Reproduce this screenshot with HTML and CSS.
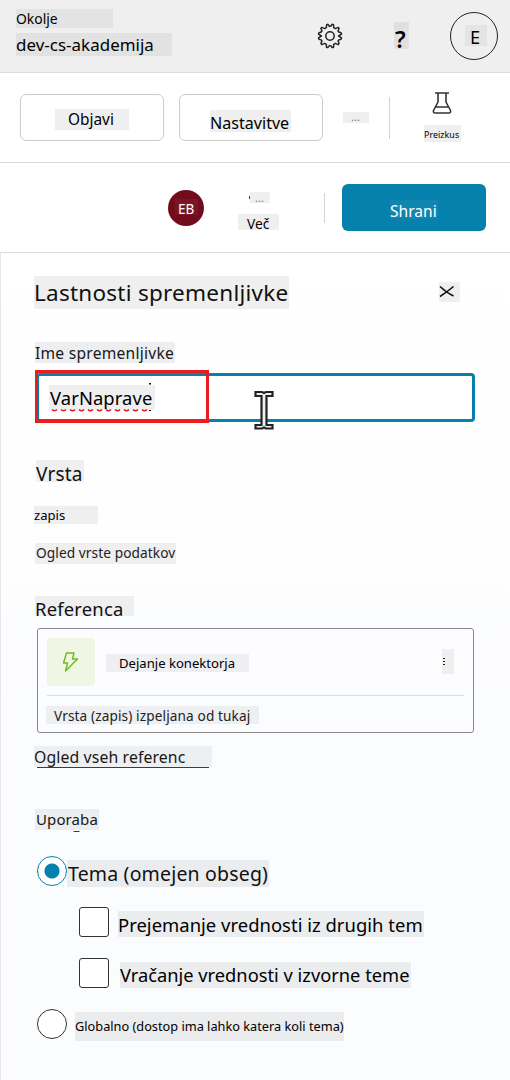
FILE: index.html
```html
<!DOCTYPE html>
<html lang="sl">
<head>
<meta charset="utf-8">
<title>Lastnosti spremenljivke</title>
<link rel="stylesheet" href="styles.css">
</head>
<body>
<header class="top">
  <div class="env">
    <div class="tag env-label">Okolje</div>
    <div class="tag env-name">dev-cs-akademija</div>
  </div>
  <svg class="gear" width="26" height="26" viewBox="0 0 26 26" fill="none" stroke="#222" stroke-width="1.5" stroke-linejoin="round"><path d="M9.300 4.700 L9.700 1.600 Q11 1 11.300 1.900 Q13 5 14.700 1.900 Q15.300 1 16.500 1.600 L16.700 4.700 L18.300 5.600 L21.200 4.400 Q22.400 5.400 21.800 6.200 Q19.900 9 23.300 9.400 Q24.700 9.600 24.500 11.200 L21.600 13 L24.500 14.800 Q24.600 16.200 23.300 16.500 Q20 17 21.800 19.700 Q22.300 20.600 21.200 21.600 L18.300 20.400 L16.700 21.300 L16.500 24.300 Q15.300 25 14.700 24 Q13 21 11.300 24 Q10.800 25 9.500 24.300 L9.300 21.300 L7.700 20.400 L4.800 21.600 Q3.700 20.600 4.200 19.700 Q6 17 2.700 16.500 Q1.400 16.200 1.500 14.800 L4.400 13 L1.500 11.200 Q1.300 9.600 2.700 9.400 Q6.100 9 4.200 6.200 Q3.600 5.400 4.800 4.400 L7.700 5.600 Z"/><circle cx="13" cy="13" r="4.200"/></svg>
  <div class="tag help">?</div>
  <div class="account"><div class="tag account-letter">E</div></div>
</header>

<nav class="bar actions">
  <button class="outline"><span class="tag publish">Objavi</span></button>
  <button class="outline second"><span class="tag settings">Nastavitve</span></button>
  <div class="tag dots overflow">...</div>
  <div class="rule rule-a"></div>
  <div class="test">
    <svg width="20" height="23" viewBox="0 0 20 23" fill="none" stroke="#333" stroke-width="1.600" stroke-linejoin="round"><path d="M3 2h14M6 2v9L1.500 19.500Q1 22 3 22h14q2 0 1.500-2.500L14 11V2M4 16h12"/></svg>
    <div class="tag test-label">Preizkus</div>
  </div>
</nav>

<section class="bar save-bar">
  <div class="avatar"><div class="tag avatar-text">EB</div></div>
  <div class="more">
    <div class="tag dots more-dots">...</div>
    <div class="tag more-label">Več</div>
  </div>
  <div class="rule rule-b"></div>
  <button class="save"><span class="tag save-text">Shrani</span></button>
</section>

<main class="panel">
  <div class="panel-head">
    <h1 class="tag title">Lastnosti spremenljivke</h1>
    <div class="tag close"><svg width="16" height="14" viewBox="0 0 16 14" stroke="#111" stroke-width="1.600" fill="none"><path d="M1 1.500Q8 8 14.500 11M14.500 1.500Q8 7 1 11.500"/></svg></div>
  </div>
  <label class="tag name-label">Ime spremenljivke</label>
  <div class="field">
    <div class="tag field-text">VarNaprave</div>
    <svg class="spelling" width="102" height="30" viewBox="0 0 102 30" fill="none"><path d="M2 26.500q2.500 2.500 5 0m4 0q2.500 2.500 5 0m4 0q2.500 2.500 5 0m4 0q2.500 2.500 5 0m4 0q2.500 2.500 5 0m4 0q2.500 2.500 5 0m4 0q2.500 2.500 5 0m4 0q2.500 2.500 5 0m4 0q2.500 2.500 5 0m4 0q2.500 2.500 5 0m4 0q2.500 2.500 5 0" stroke="#e8151c" stroke-width="1.500"/><path d="M99 0h2v1.500h-2zM99 27h2v1h-2z" fill="#111"/></svg>
    <div class="marker"></div>
    <svg class="ibeam" width="20" height="41" viewBox="0 0 20 41"><path d="M1.500 2h6.500l2 1 2-1h6.500v4h-6v29h6v3.500H12l-2-1-2 1H1.500V35h6V6h-6z" fill="#eee" stroke="#222" stroke-width="2.200"/></svg>
  </div>

  <h2 class="tag kind">Vrsta</h2>
  <div class="tag kind-value">zapis</div>
  <div class="tag kind-link">Ogled vrste podatkov</div>

  <h2 class="tag reference">Referenca</h2>
  <article class="card">
    <div class="card-row">
      <div class="card-icon"><svg width="17" height="21" viewBox="0 0 17 21" fill="none" stroke="#6cbb1c" stroke-width="1.400" stroke-linejoin="round"><path d="M4.500 2h7.500L10.500 8h5L3.500 20l2-8H1.500z"/></svg></div>
      <div class="tag card-title">Dejanje konektorja</div>
      <div class="tag card-menu"><i></i><i></i><i></i></div>
    </div>
    <div class="tag card-note">Vrsta (zapis) izpeljana od tukaj</div>
  </article>
  <a class="tag all-refs">Ogled vseh referenc</a>

  <h2 class="tag usage">Uporaba</h2>
  <div class="option option-topic"><span class="radio on"></span><span class="tag topic">Tema (omejen obseg)</span></div>
  <div class="option option-sub"><span class="check"></span><span class="tag receive">Prejemanje vrednosti iz drugih tem</span></div>
  <div class="option option-sub"><span class="check"></span><span class="tag return">Vračanje vrednosti v izvorne teme</span></div>
  <div class="option option-global"><span class="radio"></span><span class="tag global">Globalno (dostop ima lahko katera koli tema)</span></div>
</main>
</body>
</html>
```
FILE: styles.css
```css
* { box-sizing: border-box; }
body { margin: 0; width: 510px; height: 1080px; overflow: hidden; font-family: "Noto Sans", sans-serif; color: #000; background: #fff; }
h1, h2 { margin: 0; font-weight: 400; }
button { font-family: inherit; margin: 0; padding: 0; }
svg { display: block; flex: none; }

.tag { display: block; flex: none; background: #efefef; white-space: nowrap; text-align: left; font-weight: 400; }

/* environment header */
.top { display: flex; align-items: flex-start; height: 73px; background: #efefef; border-bottom: 1px solid #dcdcdc; }
.env { width: 156px; margin: 9px 0 0 16px; }
.env-label { width: 97px; height: 19px; background: #e2e4e3; font-size: 13.900px; line-height: 19px; }
.env-name { width: 156px; height: 23px; margin-top: 5px; background: #e2e2e2; font-size: 16.900px; letter-spacing: .05px; line-height: 23px; }
.gear { margin: 23px 0 0 145px; }
.help { width: 15px; height: 27px; margin: 22px 0 0 51px; padding-left: 1px; background: #e0e0e0; font-size: 23px; line-height: 34px; font-weight: 600; }
.account { width: 48px; height: 48px; margin: 12px 0 0 41px; padding: 12px 0 0 14px; border: 1px solid #222; border-radius: 50%; }
.account-letter { width: 22px; height: 21px; padding-left: 5px; background: #e4e4e4; font-size: 18.200px; line-height: 25px; }

/* action rows */
.bar { display: flex; align-items: flex-start; height: 90px; border-bottom: 1px solid #dadada; }
.outline { width: 144px; height: 47px; margin: 21px 0 0 20px; display: flex; align-items: flex-start; background: #fff; border: 1px solid #cfcccc; border-radius: 6px; color: inherit; }
.second { margin-left: 15px; }
.publish { width: 74px; height: 21px; margin: 14px 0 0 34px; padding-left: 13px; font-size: 15.400px; line-height: 21px; }
.settings { width: 81px; height: 22px; margin: 15px 0 0 30px; font-size: 16.100px; line-height: 26px; }
.dots { font-size: 11px; line-height: 10px; color: #777; }
.overflow { width: 26px; height: 11px; margin: 39px 0 0 20px; padding-left: 8px; }
.rule { width: 1px; flex: none; background: #d2d2d2; }
.rule-a { height: 42px; margin: 24px 0 0 20px; }
.test { width: 37px; margin: 18px 0 0 34px; }
.test svg { margin-left: 8px; }
.test-label { width: 37px; height: 17px; margin-top: 11px; font-size: 8.900px; letter-spacing: .05px; line-height: 19px; }
.avatar { width: 36px; height: 36px; margin: 27px 0 0 168px; padding: 9px 0 0 7px; border-radius: 50%; background: #720b1c; color: #fff; }
.avatar-text { width: 23px; height: 16px; padding-left: 3px; background: #7a1525; font-size: 13.500px; line-height: 20px; }
.more { position: relative; width: 41px; margin: 29px 0 0 34px; }
.more::before { content: ""; position: absolute; left: 11px; top: 4px; width: 1px; height: 3px; background: #444; }
.more-dots { width: 20px; height: 11px; margin-left: 12px; padding-left: 5px; line-height: 12px; }
.more-label { width: 41px; height: 16px; margin-top: 11px; padding-left: 9px; font-size: 13.800px; line-height: 20px; }
.rule-b { height: 30px; margin: 30px 0 0 45px; }
.save { display: flex; align-items: flex-start; width: 144px; height: 47px; margin: 21px 0 0 17px; border: 0; border-radius: 6px; background: #0680ad; color: #fff; }
.save-text { width: 48px; height: 19px; margin: 16px 0 0 48px; background: #1085b0; font-size: 15.600px; line-height: 23px; }

/* properties panel */
.panel { height: 827px; padding: 23px 0 0 33px; border-left: 1px solid #e8e6e6; background: linear-gradient(#fff 0%, #fefefe 30%, #fbfcfe 60%); }
.panel-head { display: flex; align-items: flex-start; }
.title { width: 255px; height: 33px; font-size: 22.500px; letter-spacing: .25px; line-height: 34px; color: #111; }
.close { width: 21px; height: 20px; margin: 6px 0 0 150px; padding-top: 3px; }
.name-label { width: 140px; height: 21px; margin: 33px 0 0 1px; background: #edeef0; font-size: 15.600px; letter-spacing: .25px; line-height: 22px; color: #181818; }
.field { position: relative; width: 439px; height: 49px; margin: 10px 0 0 2px; padding: 9px 0 0 10px; border: 3px solid #0680ad; border-radius: 4px; background: #fff; }
.field-text { width: 106px; height: 25px; padding-left: 1px; font-size: 18.400px; letter-spacing: .1px; line-height: 25px; }
.spelling { position: absolute; left: 11px; top: 7px; }
.marker { position: absolute; left: -4px; top: -6px; width: 174px; height: 53px; border: 3px solid #e91c20; }
.ibeam { position: absolute; left: 215px; top: 14px; }
.kind { width: 48px; height: 22px; margin: 38px 0 0 2px; font-size: 19px; letter-spacing: .2px; line-height: 28px; color: #111; }
.kind-value { width: 64px; height: 18px; margin-top: 24px; font-size: 13.100px; line-height: 18px; }
.kind-link { width: 141px; height: 21px; margin: 19px 0 0 1px; padding-left: 1px; font-size: 13.700px; letter-spacing: .08px; line-height: 20px; color: #222; }
.reference { width: 99px; height: 20px; margin: 32px 0 0 1px; font-size: 18.400px; letter-spacing: .2px; line-height: 25px; color: #111; }
.card { width: 437px; height: 105px; margin: 12px 0 0 3px; padding: 9px 9px 0; border: 1px solid #8a8688; border-radius: 3px; }
.card-row { display: flex; align-items: flex-start; height: 58px; border-bottom: 1px solid #dededf; }
.card-icon { width: 48px; height: 48px; padding: 13px 0 0 15px; border-radius: 3px; background: #f0f6e4; }
.card-title { width: 143px; height: 18px; margin: 16px 0 0 11px; padding-left: 13px; background: #eeeff0; font-size: 13.100px; line-height: 18px; }
.card-menu { width: 12px; height: 25px; margin: 11px 0 0 193px; padding: 9px 0 0 1px; }
.card-menu i { display: block; width: 2px; height: 1px; margin-bottom: 2px; background: #222; }
.card-note { width: 213px; height: 18px; margin: 10px 0 0 -1px; padding-left: 8px; background: #eeeff0; font-size: 13.600px; letter-spacing: .13px; line-height: 19px; color: #222; }
.all-refs { position: relative; width: 178px; height: 21px; margin-top: 13px; background: #eeeff0; font-size: 15.800px; letter-spacing: .12px; line-height: 22px; color: #181818; }
.all-refs::after { content: ""; position: absolute; left: 3px; top: 21px; width: 172px; height: 1px; background: #174b59; }
.usage { position: relative; width: 64px; height: 21px; margin: 42px 0 0 1px; padding-left: 1px; background: #ecedef; font-size: 15px; letter-spacing: .1px; line-height: 21px; color: #181818; }
.usage::after { content: ""; position: absolute; left: 38px; top: 20px; width: 7px; height: 2px; border-bottom: 1px solid #333; border-radius: 50%; }
.option { display: flex; align-items: flex-start; }
.option .tag { background: #ebecee; }
.radio { width: 30px; height: 30px; flex: none; border: 1px solid #333; border-radius: 50%; background: #fff; }
.radio.on { border-color: #0680ad; background: radial-gradient(circle, #0680ad 7px, #fff 8px); }
.check { width: 30px; height: 30px; flex: none; border: 1px solid #333; border-radius: 3px; background: #fff; }
.option-topic { margin: 26px 0 0 3px; }
.option-topic .tag { width: 202px; height: 27px; margin-top: 4px; padding-left: 1px; font-size: 19.500px; letter-spacing: .18px; line-height: 28px; color: #111; }
.option-sub { margin: 21px 0 0 45px; }
.option-topic + .option-sub { margin-top: 20px; }
.receive { width: 306px; height: 26px; margin: 4px 0 0 9px; font-size: 18.450px; letter-spacing: .02px; line-height: 27px; }
.return { width: 291px; height: 26px; margin: 4px 0 0 11px; font-size: 18.300px; line-height: 26px; }
.option-global { margin: 21px 0 0 3px; }
.global { width: 269px; height: 29px; margin: 3px 0 0 8px; font-size: 12.750px; line-height: 29px; }
```
